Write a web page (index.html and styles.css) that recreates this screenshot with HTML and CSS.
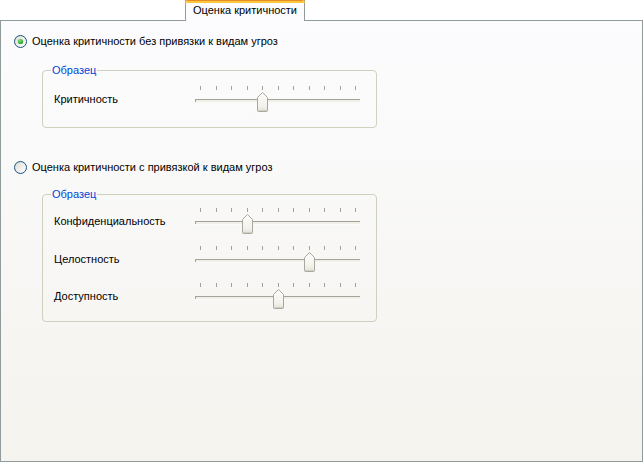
FILE: index.html
```html
<!DOCTYPE html>
<html lang="ru">
<head>
<meta charset="utf-8">
<title>Оценка критичности</title>
<link rel="stylesheet" href="styles.css">
</head>
<body>
<svg class="defs" width="0" height="0" aria-hidden="true">
  <defs>
    <linearGradient id="thumbFill" x1="0" y1="0" x2="0" y2="1">
      <stop offset="0" stop-color="#fdfdfb"/>
      <stop offset="0.7" stop-color="#f3f2ec"/>
      <stop offset="1" stop-color="#e4e2d8"/>
    </linearGradient>
    <linearGradient id="radioFill" x1="0" y1="0" x2="1" y2="1">
      <stop offset="0" stop-color="#dcdcd6"/>
      <stop offset="1" stop-color="#ffffff"/>
    </linearGradient>
    <radialGradient id="dotFill" cx="0.4" cy="0.35" r="0.7">
      <stop offset="0" stop-color="#7fe07b"/>
      <stop offset="1" stop-color="#1f9a1c"/>
    </radialGradient>
    <g id="ticks" fill="#a2a29c">
      <rect x="7" y="1" width="1" height="4"/>
      <rect x="23" y="1" width="1" height="4"/>
      <rect x="38" y="1" width="1" height="4"/>
      <rect x="54" y="1" width="1" height="4"/>
      <rect x="69" y="1" width="1" height="4"/>
      <rect x="85" y="1" width="1" height="4"/>
      <rect x="100" y="1" width="1" height="4"/>
      <rect x="116" y="1" width="1" height="4"/>
      <rect x="131" y="1" width="1" height="4"/>
      <rect x="147" y="1" width="1" height="4"/>
      <rect x="162" y="1" width="1" height="4"/>
    </g>
    <g id="track">
      <rect x="2" y="14" width="165" height="4" rx="1" fill="#f1f0e8"/>
      <rect x="2" y="14" width="165" height="1" fill="#a3a29b"/>
      <rect x="2" y="14" width="1" height="3" fill="#a3a29b"/>
      <rect x="2" y="17" width="165" height="1" fill="#fbfbf8"/>
    </g>
    <g id="thumb">
      <path d="M0.5,12.5 L5.5,7.5 L10.5,12.5 L10.5,25.5 Q10.5,26.5 9.5,26.5 L1.5,26.5 Q0.5,26.5 0.5,25.5 Z" fill="url(#thumbFill)" stroke="#a9a89f"/>
      <rect x="1" y="25" width="9" height="1" fill="#d2d0c2"/>
    </g>
  </defs>
</svg>

<div class="window">
  <div class="tabbar">
    <div class="tab">Оценка критичности</div>
  </div>
  <div class="panel">
    <div class="radio-row r1">
      <svg class="radio" width="13" height="13" viewBox="0 0 13 13">
        <circle cx="6.5" cy="6.5" r="6" fill="url(#radioFill)" stroke="#1c5180"/>
        <circle cx="6.5" cy="6.5" r="2.6" fill="url(#dotFill)"/>
      </svg>
      <span>Оценка критичности без привязки к видам угроз</span>
    </div>

    <fieldset class="group g1">
      <legend>Образец</legend>
      <div class="row">
        <span class="lbl">Критичность</span>
        <svg class="slider" width="170" height="28" viewBox="0 0 170 28">
          <use href="#ticks"/><use href="#track"/><use href="#thumb" x="64"/>
        </svg>
      </div>
    </fieldset>

    <div class="radio-row r2">
      <svg class="radio" width="13" height="13" viewBox="0 0 13 13">
        <circle cx="6.5" cy="6.5" r="6" fill="url(#radioFill)" stroke="#1c5180"/>
      </svg>
      <span>Оценка критичности с привязкой к видам угроз</span>
    </div>

    <fieldset class="group g2">
      <legend>Образец</legend>
      <div class="row">
        <span class="lbl">Конфиденциальность</span>
        <svg class="slider" width="170" height="28" viewBox="0 0 170 28">
          <use href="#ticks"/><use href="#track"/><use href="#thumb" x="49"/>
        </svg>
      </div>
      <div class="row">
        <span class="lbl">Целостность</span>
        <svg class="slider" width="170" height="28" viewBox="0 0 170 28">
          <use href="#ticks"/><use href="#track"/><use href="#thumb" x="111"/>
        </svg>
      </div>
      <div class="row last">
        <span class="lbl">Доступность</span>
        <svg class="slider" width="170" height="28" viewBox="0 0 170 28">
          <use href="#ticks"/><use href="#track"/><use href="#thumb" x="80"/>
        </svg>
      </div>
    </fieldset>
  </div>
</div>
</body>
</html>
```
FILE: styles.css
```css
* { box-sizing: border-box; }

body {
  margin: 0;
  background: #ffffff;
  font: 11px "Liberation Sans", Arial, sans-serif;
  color: #000;
}

.defs { position: absolute; width: 0; height: 0; }

.window {
  width: 644px;
  height: 463px;
}

.tabbar {
  height: 20px;
  display: flex;
  padding-left: 185px;
}

.tab {
  position: relative;
  z-index: 1;
  width: 120px;
  height: 21px;
  border-left: 1px solid #919b9c;
  border-right: 1px solid #919b9c;
  background: #fcfcfe;
  padding-top: 3px;
  line-height: 15px;
  text-align: center;
}

.tab::before {
  content: "";
  position: absolute;
  top: 0;
  left: -1px;
  right: -1px;
  height: 3px;
  border-radius: 3px 3px 0 0;
  background: linear-gradient(#e68b2c 0 1px, #ffc73c 1px 3px);
}

.panel {
  width: 643px;
  height: 442px;
  border: 1px solid #919b9c;
  background: linear-gradient(#fcfcfe, #f4f3ee);
  padding-top: 14px;
}

.radio-row {
  display: flex;
  align-items: center;
  height: 13px;
  line-height: 13px;
  padding-left: 13px;
}

.radio-row span { margin-left: 5px; }

.radio { display: block; flex: none; }

.r2 { margin-top: 33px; }

.group {
  margin: 15px 0 0 41px;
  padding: 8px 0 14px 0;
  width: 335px;
  min-width: 0;
  border: 1px solid #d0d0bf;
  border-radius: 4px;
}

.group legend {
  margin-left: 8px;
  padding: 0 1px;
  line-height: 14px;
  color: #0046d5;
}

.g2 {
  margin-top: 13px;
  padding-top: 6px;
  padding-bottom: 11px;
}

.row {
  display: flex;
  align-items: center;
  height: 28px;
}

.g2 .row + .row { margin-top: 10px; }
.g2 .row.last { margin-top: 9px; }

.lbl {
  width: 150px;
  padding-left: 11px;
  line-height: 28px;
}

.slider { display: block; flex: none; }
```
